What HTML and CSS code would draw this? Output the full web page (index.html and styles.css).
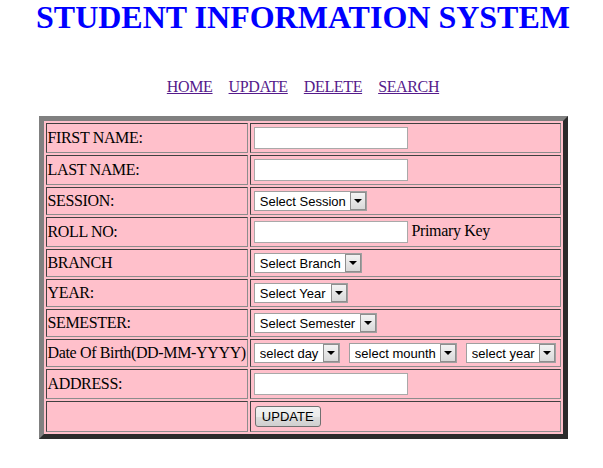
FILE: index.html
```html
<!DOCTYPE html>
<html>
<head>
<meta charset="utf-8">
<title>Student Information System</title>
<link rel="stylesheet" href="styles.css">
</head>
<body>
<h1 class="title">STUDENT INFORMATION SYSTEM</h1>
<nav class="nav">
  <a href="#">HOME</a>
  <a href="#">UPDATE</a>
  <a href="#">DELETE</a>
  <a href="#">SEARCH</a>
</nav>
<form class="form">
<table class="form-table">
  <tr class="r-in">
    <td class="label">FIRST NAME:</td>
    <td class="field"><input type="text" class="txt"></td>
  </tr>
  <tr class="r-in">
    <td class="label">LAST NAME:</td>
    <td class="field"><input type="text" class="txt"></td>
  </tr>
  <tr class="r-sel">
    <td class="label">SESSION:</td>
    <td class="field"><span class="sel"><select><option>Select Session</option></select></span></td>
  </tr>
  <tr class="r-in">
    <td class="label">ROLL NO:</td>
    <td class="field"><input type="text" class="txt txt-key"> Primary Key</td>
  </tr>
  <tr class="r-sel">
    <td class="label">BRANCH</td>
    <td class="field"><span class="sel"><select><option>Select Branch</option></select></span></td>
  </tr>
  <tr class="r-sel">
    <td class="label">YEAR:</td>
    <td class="field"><span class="sel"><select><option>Select Year</option></select></span></td>
  </tr>
  <tr class="r-sel">
    <td class="label">SEMESTER:</td>
    <td class="field"><span class="sel"><select><option>Select Semester</option></select></span></td>
  </tr>
  <tr class="r-sel">
    <td class="label">Date Of Birth(DD-MM-YYYY)</td>
    <td class="field">
      <div class="dob">
        <span class="sel"><select><option>select day</option></select></span>
        <span class="sel"><select><option>select mounth</option></select></span>
        <span class="sel"><select><option>select year</option></select></span>
      </div>
    </td>
  </tr>
  <tr class="r-in">
    <td class="label">ADDRESS:</td>
    <td class="field"><input type="text" class="txt"></td>
  </tr>
  <tr class="r-btn">
    <td class="label"></td>
    <td class="field"><button type="button" class="btn">UPDATE</button></td>
  </tr>
</table>
</form>
</body>
</html>
```
FILE: styles.css
```css
body {
  margin: 0;
  padding: 0 0 0 3px;
  background: #ffffff;
  font-family: "Liberation Serif", "Times New Roman", serif;
  color: #000000;
}

.title {
  margin: 0;
  text-align: center;
  color: #0000ff;
  font-size: 32px;
  font-weight: bold;
  line-height: 34px;
}

.nav {
  margin-top: 44px;
  display: flex;
  justify-content: center;
  gap: 16px;
  font-size: 16px;
  line-height: 18px;
  letter-spacing: -0.35px;
}

.nav a {
  color: #551a8b;
  text-decoration: underline;
}

.form {
  margin: 20px 0 0 0;
}

.form-table {
  margin: 0 auto;
  width: 529px;
  border-collapse: separate;
  border-spacing: 2px;
  border: 5px solid;
  border-color: #808080 #2b2b2b #2b2b2b #808080;
  background: #ffc0cb;
}

.form-table td {
  box-sizing: border-box;
  border: 1px solid;
  border-color: #404040 #8c8c8c #8c8c8c #404040;
  padding: 1px;
  font-size: 16px;
  line-height: 18px;
  letter-spacing: -0.35px;
  vertical-align: middle;
  white-space: nowrap;
}

.form-table td.label {
  width: 202px;
}

.r-in td { height: 30px; }
.r-sel td { height: 28px; }
.r-btn td { height: 31px; }

.txt {
  box-sizing: border-box;
  width: 154px;
  height: 22px;
  margin: 2px;
  padding: 1px 3px;
  border: 1px solid #a9a9a9;
  background: #ffffff;
  font: 13px "Liberation Sans", Arial, sans-serif;
  letter-spacing: normal;
  vertical-align: middle;
}

.txt-key {
  margin-right: 0;
}

.sel {
  position: relative;
  display: inline-block;
  margin: 2px;
  vertical-align: middle;
}

.sel select {
  -webkit-appearance: none;
  appearance: none;
  display: block;
  box-sizing: border-box;
  height: 20px;
  margin: 0;
  padding: 0 20px 0 5px;
  border: 1px solid #a0a0a0;
  border-radius: 0;
  background: #ffffff;
  color: #000000;
  font: 13px "Liberation Sans", Arial, sans-serif;
  letter-spacing: normal;
}

.sel::after {
  content: "";
  position: absolute;
  top: 1px;
  right: 1px;
  bottom: 1px;
  width: 16px;
  box-sizing: border-box;
  border: 1px solid #8e8e8e;
  background: linear-gradient(#f3f3f3, #d9d9d9);
  pointer-events: none;
}

.sel::before {
  content: "";
  position: absolute;
  right: 5px;
  top: 50%;
  margin-top: -2px;
  width: 0;
  height: 0;
  border-left: 4px solid transparent;
  border-right: 4px solid transparent;
  border-top: 4px solid #000000;
  z-index: 1;
  pointer-events: none;
}

.dob {
  display: flex;
  align-items: center;
  gap: 5px;
}

.btn {
  box-sizing: border-box;
  height: 21px;
  margin: 2px 3px;
  padding: 0 6px;
  border: 1px solid #707070;
  border-radius: 3px;
  background: linear-gradient(#f2f2f2 0%, #ebebeb 50%, #dddddd 51%, #cfcfcf 100%);
  color: #000000;
  font: 13px "Liberation Sans", Arial, sans-serif;
  letter-spacing: normal;
  vertical-align: middle;
}
```
